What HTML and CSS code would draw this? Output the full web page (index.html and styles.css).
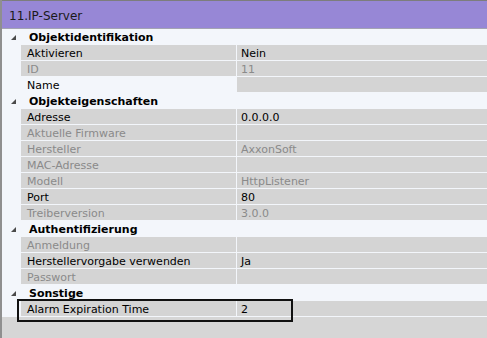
FILE: index.html
```html
<!DOCTYPE html>
<html lang="de">
<head>
    <title>11.IP-Server</title>
    <link rel="stylesheet" href="styles.css">
</head>
<body>

<div class="window">
    <div class="titlebar">11.IP-Server</div>

    <div class="grid">
        <!-- Objektidentifikation -->
        <div class="cat"><span class="arrow"></span><span class="cat-name">Objektidentifikation</span></div>
        <div class="row"><span class="label">Aktivieren</span><span class="value">Nein</span></div>
        <div class="row off"><span class="label">ID</span><span class="value">11</span></div>
        <div class="row"><span class="label light">Name</span><span class="value"></span></div>

        <!-- Objekteigenschaften -->
        <div class="cat"><span class="arrow"></span><span class="cat-name">Objekteigenschaften</span></div>
        <div class="row"><span class="label">Adresse</span><span class="value">0.0.0.0</span></div>
        <div class="row off"><span class="label">Aktuelle Firmware</span><span class="value"></span></div>
        <div class="row off"><span class="label">Hersteller</span><span class="value">AxxonSoft</span></div>
        <div class="row off"><span class="label">MAC-Adresse</span><span class="value"></span></div>
        <div class="row off"><span class="label">Modell</span><span class="value">HttpListener</span></div>
        <div class="row"><span class="label">Port</span><span class="value">80</span></div>
        <div class="row off"><span class="label">Treiberversion</span><span class="value">3.0.0</span></div>

        <!-- Authentifizierung -->
        <div class="cat"><span class="arrow"></span><span class="cat-name">Authentifizierung</span></div>
        <div class="row off"><span class="label">Anmeldung</span><span class="value"></span></div>
        <div class="row"><span class="label">Herstellervorgabe verwenden</span><span class="value">Ja</span></div>
        <div class="row off"><span class="label">Passwort</span><span class="value"></span></div>

        <!-- Sonstige -->
        <div class="cat"><span class="arrow"></span><span class="cat-name">Sonstige</span></div>
        <div class="row"><span class="label">Alarm Expiration Time</span><span class="value">2</span></div>
    </div>

    <div class="empty"></div>

    <div class="highlight"></div>
</div>

</body>
</html>
```

FILE: styles.css
```css
body {
    margin: 0;
    font-family: "DejaVu Sans", Verdana, sans-serif;
    font-size: 11px;
    color: #000;
    background-color: #d6d6d6;
}
.window {
    position: relative;
    height: 338px;
    border-left: 2px solid #8f8f8f;
    background-color: #d6d6d6;
}
.titlebar {
    height: 27px;
    line-height: 30px;
    padding-left: 7px;
    font-size: 12px;
    color: #1a1a1a;
    background-color: #9787d6;
    border-top: 1px solid #7d7d7d;
    border-bottom: 1px solid #a3a3b3;
}
.grid {
    background-color: #f3f6fb;
}
.cat {
    display: flex;
    align-items: center;
    height: 16px;
    line-height: 17px;
}
.arrow {
    width: 0;
    height: 0;
    margin-left: 9px;
    margin-right: 11px;
    margin-top: 1px;
    border-left: 5px solid transparent;
    border-bottom: 5px solid #4a4a4a;
}
.cat-name {
    font-weight: bold;
    padding-left: 2px;
}
.row {
    display: grid;
    grid-template-columns: 216px 1fr;
    margin-left: 19px;
    height: 16px;
    line-height: 17px;
}
.label, .value {
    background-color: #d4d4d4;
    border-bottom: 1px solid #f3f6fb;
    height: 15px;
    white-space: nowrap;
    overflow: hidden;
}
.label {
    padding-left: 6px;
    border-right: 1px solid #f3f6fb;
}
.label.light {
    background-color: #f3f6fb;
}
.value {
    padding-left: 4px;
}
.off .label, .off .value {
    color: #8a8a8a;
}
.empty {
    height: 21px;
}
.highlight {
    position: absolute;
    left: 15px;
    top: 299px;
    width: 272px;
    height: 19px;
    border: 2px solid #111;
}
```
